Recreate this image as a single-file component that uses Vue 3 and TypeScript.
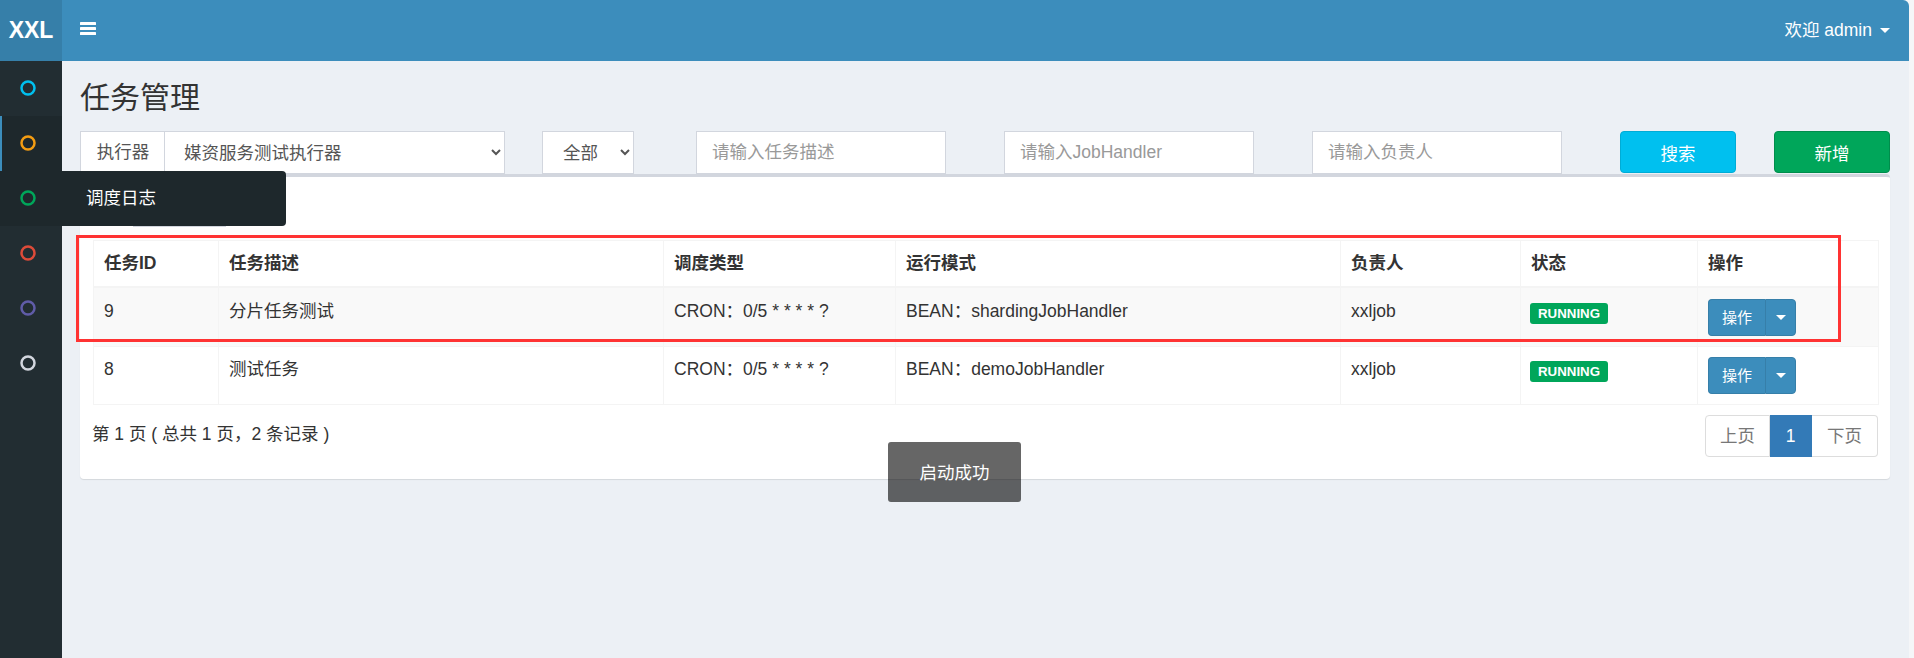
<script setup lang="ts">
interface Job { id: number; desc: string; cron: string; mode: string; owner: string; status: string }
const dots = ['#00c0ef', '#f39c12', '#00a65a', '#dd4b39', '#605ca8', '#d2d6de']
const jobs: Job[] = [
  { id: 9, desc: '分片任务测试', cron: 'CRON：0/5 * * * * ?', mode: 'BEAN：shardingJobHandler', owner: 'xxljob', status: 'RUNNING' },
  { id: 8, desc: '测试任务', cron: 'CRON：0/5 * * * * ?', mode: 'BEAN：demoJobHandler', owner: 'xxljob', status: 'RUNNING' },
]
</script>

<template>
  <div class="page">
    <aside class="sidebar">
      <div class="logo">XXL</div>
      <ul class="menu">
        <li v-for="(c, i) in dots" :key="c" class="menu-item" :class="{ active: i === 1, hover: i === 2 }">
          <svg class="dot" width="18" height="18" viewBox="0 0 18 18"><circle cx="9" cy="9" r="6.5" fill="none" :stroke="c" stroke-width="2.5" /></svg>
          <span v-if="i === 2" class="flyout">调度日志</span>
        </li>
      </ul>
    </aside>
    <div class="main">
      <header class="topbar">
        <svg class="burger" width="16" height="13" viewBox="0 0 16 13"><rect y="0" width="16" height="3" rx="0.6" fill="#fff" /><rect y="5" width="16" height="3" rx="0.6" fill="#fff" /><rect y="10" width="16" height="3" rx="0.6" fill="#fff" /></svg>
        <div class="user">欢迎 admin<span class="caret user-caret"></span></div>
      </header>
      <div class="content">
        <h1 class="title">任务管理</h1>
        <div class="filters">
          <div class="group">
            <span class="addon">执行器</span>
            <select class="ctl sel-wide"><option>媒资服务测试执行器</option></select>
          </div>
          <select class="ctl sel-status"><option>全部</option></select>
          <input class="ctl ipt ipt-first" placeholder="请输入任务描述" />
          <input class="ctl ipt ipt-next" placeholder="请输入JobHandler" />
          <input class="ctl ipt ipt-next" placeholder="请输入负责人" />
          <button class="btn btn-search">搜索</button>
          <button class="btn btn-add">新增</button>
        </div>
        <section class="box">
          <div class="peek"></div>
          <table class="table">
            <colgroup><col style="width:125px" /><col style="width:445px" /><col style="width:232px" /><col style="width:445px" /><col style="width:180px" /><col style="width:177px" /><col style="width:181px" /></colgroup>
            <thead>
              <tr><th>任务ID</th><th>任务描述</th><th>调度类型</th><th>运行模式</th><th>负责人</th><th>状态</th><th>操作</th></tr>
            </thead>
            <tbody>
              <tr v-for="j in jobs" :key="j.id">
                <td>{{ j.id }}</td><td>{{ j.desc }}</td><td>{{ j.cron }}</td><td>{{ j.mode }}</td><td>{{ j.owner }}</td>
                <td><span class="badge">{{ j.status }}</span></td>
                <td>
                  <div class="split"><span class="split-main">操作</span><span class="split-toggle"><span class="caret"></span></span></div>
                </td>
              </tr>
            </tbody>
          </table>
          <div class="foot">
            <div class="info">第 1 页 ( 总共 1 页，2 条记录 )</div>
            <div class="pager"><span class="pg pg-prev">上页</span><span class="pg pg-cur">1</span><span class="pg pg-next">下页</span></div>
          </div>
          <div class="highlight"></div>
        </section>
        <div class="toast">启动成功</div>
      </div>
    </div>
  </div>
</template>

<style>
html, body { margin: 0; padding: 0; background: #f5f6f8; }
</style>

<style scoped>
.page {
  display: flex;
  width: 1914px;
  height: 658px;
  overflow: hidden;
  background: #f5f6f8;
  color: #333;
  font-family: "Liberation Sans", "Noto Sans CJK SC", sans-serif;
  font-size: 17.5px;
}
.sidebar { width: 62px; flex: none; background: #222d32; }
.logo {
  height: 61px;
  background: #367fa9;
  color: #fff;
  font-size: 23px;
  font-weight: 700;
  line-height: 61px;
  text-align: center;
}
.menu { list-style: none; margin: 0; padding: 0; }
.menu-item {
  position: relative;
  height: 55px;
  box-sizing: border-box;
  display: flex;
  align-items: center;
  padding: 0 0 2px 19px;
}
.menu-item.active { background: #1e282c; box-shadow: inset 2px 0 0 #3c8dbc; }
.dot { position: relative; z-index: 2; display: block; }
.flyout {
  position: absolute;
  left: 0;
  top: 0;
  width: 286px;
  height: 55px;
  box-sizing: border-box;
  padding-left: 86px;
  line-height: 55px;
  background: #1e282c;
  border-radius: 0 4px 4px 0;
  color: #fff;
  z-index: 1;
}
.main { width: 1847px; flex: none; display: flex; flex-direction: column; }
.topbar {
  height: 61px;
  box-sizing: border-box;
  flex: none;
  background: #3c8dbc;
  border-top-right-radius: 6px;
  display: flex;
  align-items: center;
  justify-content: space-between;
  padding: 0 19px 4px 18px;
  color: #fff;
}
.burger { display: block; }
.user { display: flex; align-items: center; }
.caret {
  display: inline-block;
  width: 0;
  height: 0;
  border-top: 5px solid #fff;
  border-left: 5px solid transparent;
  border-right: 5px solid transparent;
}
.user-caret { margin: 4px 0 0 8px; }
.content { position: relative; flex: 1; padding: 0 19px 0 18px; background: #ecf0f5; }
.title { margin: 0; height: 70px; font-size: 30px; font-weight: 400; line-height: 74px; color: #333; }
.filters { display: flex; height: 43px; }
.group { display: flex; width: 425px; flex: none; }
.addon {
  width: 85px;
  box-sizing: border-box;
  flex: none;
  border: 1px solid #d2d6de;
  background: #fff;
  color: #555;
  text-align: center;
  line-height: 41px;
  padding-left: 1px;
}
.ctl {
  box-sizing: border-box;
  height: 43px;
  border: 1px solid #d2d6de;
  border-radius: 0;
  background-color: #fff;
  color: #555;
  font: inherit;
  outline: none;
}
.sel-wide { flex: 1; min-width: 0; margin-left: -1px; padding: 0 15px; }
.sel-status { width: 92px; margin-left: 37px; padding: 0 16px; flex: none; }
.ipt { width: 250px; flex: none; padding: 0 15px; }
.ipt::placeholder { color: #999; opacity: 1; }
.ipt-first { margin-left: 62px; }
.ipt-next { margin-left: 58px; }
.btn {
  box-sizing: border-box;
  width: 116px;
  height: 42px;
  flex: none;
  border: 1px solid;
  border-radius: 4px;
  color: #fff;
  font: inherit;
  padding: 0;
}
.btn-search { margin-left: 58px; background: #00c0ef; border-color: #00acd6; }
.btn-add { margin-left: 38px; background: #00a65a; border-color: #008d4c; }
.box {
  position: relative;
  box-sizing: border-box;
  height: 305px;
  background: #fff;
  border-top: 3px solid #d2d6de;
  border-radius: 4px;
  box-shadow: 0 1px 1px rgba(0, 0, 0, 0.1);
  padding: 63px 12px 0 13px;
}
.peek {
  position: absolute;
  left: 53px;
  top: 49px;
  width: 93px;
  height: 1px;
  background: #d2d6de;
}
.table { width: 1785px; table-layout: fixed; border-collapse: collapse; }
.table th, .table td {
  border: 1px solid #f4f4f4;
  box-sizing: border-box;
  text-align: left;
  vertical-align: top;
  padding: 10px;
  line-height: 25px;
}
.table th { height: 46px; border-bottom-width: 2px; font-weight: 700; }
.table td { height: 58px; }
.table tbody tr:first-child td { padding-top: 11px; }
.table tbody tr:nth-child(odd) { background: #f9f9f9; }
.badge {
  display: inline-block;
  background: #00a65a;
  color: #fff;
  font-size: 13.3px;
  font-weight: 700;
  line-height: 21px;
  height: 21px;
  padding: 0 8px;
  border-radius: 3px;
  vertical-align: top;
  margin: 4px 0 0 -1px;
}
.split { display: inline-flex; height: 37px; vertical-align: top; font-size: 15px; color: #fff; }
.split-main {
  width: 57px;
  box-sizing: border-box;
  background: #3c8dbc;
  border: 1px solid #367fa9;
  border-right: 0;
  border-radius: 4px 0 0 4px;
  text-align: center;
  line-height: 35px;
}
.split-toggle {
  width: 31px;
  box-sizing: border-box;
  background: #3c8dbc;
  border: 1px solid #367fa9;
  border-radius: 0 4px 4px 0;
  display: flex;
  align-items: center;
  justify-content: center;
}
.foot { display: flex; justify-content: space-between; align-items: flex-start; padding-top: 10px; width: 1785px; }
.info { line-height: 38px; height: 42px; margin-left: -1px; }
.pager { display: flex; height: 42px; }
.pg {
  box-sizing: border-box;
  border: 1px solid #ddd;
  border-left-width: 0;
  color: #777;
  text-align: center;
  line-height: 40px;
}
.pg-prev { width: 65px; border-left-width: 1px; border-radius: 4px 0 0 4px; }
.pg-cur { width: 42px; background: #337ab7; border-color: #337ab7; color: #fff; }
.pg-next { width: 66px; border-radius: 0 4px 4px 0; }
.highlight {
  position: absolute;
  left: -4px;
  top: 58px;
  width: 1765px;
  height: 107px;
  box-sizing: border-box;
  border: 3px solid #f33;
  pointer-events: none;
}
.toast {
  position: absolute;
  left: 826px;
  top: 381px;
  width: 133px;
  height: 60px;
  background: rgba(0, 0, 0, 0.6);
  border-radius: 3px;
  color: #fff;
  text-align: center;
  line-height: 62px;
}
</style>
